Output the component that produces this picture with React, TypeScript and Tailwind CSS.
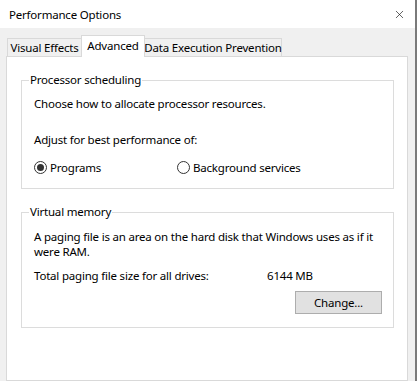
import { X } from 'lucide-react'

function Radio({ checked, label }: { checked?: boolean; label: string }) {
    return (
        <label className="flex items-center gap-[3px]">
            <span className="w-[13px] h-[13px] rounded-full border border-[#333333] bg-white flex items-center justify-center">
                {checked && <span className="w-[7px] h-[7px] rounded-full bg-[#333333]" />}
            </span>
            <span>{label}</span>
        </label>
    )
}

function GroupBox({ title, children }: { title: string; children: React.ReactNode }) {
    return (
        <fieldset className="ml-[14px] mr-[13px] border border-[#dcdcdc] pl-[12px] pr-[11px]">
            <legend className="-ml-[5px] px-[1px] leading-[16px]">{title}</legend>
            {children}
        </fieldset>
    )
}

export default function App() {
    return (
        <div
            className="w-[417px] h-[381px] flex flex-col bg-[#f0f0f0] text-[11.5px] tracking-[-0.2px] leading-[15px] text-black border-r-2 border-[#7a7a7a] overflow-hidden"
            style={{ fontFamily: '"Noto Sans", sans-serif' }}
        >
            <div className="h-[28px] shrink-0 bg-white flex items-center justify-between pl-[9px] pr-[9px]">
                <span>Performance Options</span>
                <X className="w-[13px] h-[13px] text-[#111]" strokeWidth={1.2} />
            </div>

            <div className="flex flex-col flex-1 pl-[6px] pr-[7px] pt-[7px]">
                <div className="flex items-end pl-[1px] whitespace-nowrap">
                    <div className="w-[74px] h-[18px] border-l border-t border-[#d9d9d9] flex items-center justify-center">
                        Visual Effects
                    </div>
                    <div className="relative z-10 -mb-px w-[64px] h-[22px] border-l border-t border-r border-[#d9d9d9] bg-white flex items-start justify-center pt-[2px]">
                        Advanced
                    </div>
                    <div className="w-[137px] h-[18px] border-t border-r border-[#d9d9d9] flex items-center justify-center">
                        Data Execution Prevention
                    </div>
                </div>

                <div className="flex-1 bg-white border border-[#d9d9d9] pt-[15px] flex flex-col gap-[15px]">
                    <GroupBox title="Processor scheduling">
                        <div className="pt-[8px] pb-[13px] flex flex-col">
                            <p>Choose how to allocate processor resources.</p>
                            <p className="mt-[21px]">Adjust for best performance of:</p>
                            <div className="mt-[13px] flex">
                                <div className="w-[143px]">
                                    <Radio checked label="Programs" />
                                </div>
                                <Radio label="Background services" />
                            </div>
                        </div>
                    </GroupBox>

                    <GroupBox title="Virtual memory">
                        <div className="pt-[9px] pb-[13px] flex flex-col">
                            <p>A paging file is an area on the hard disk that Windows uses as if it were RAM.</p>
                            <div className="mt-[9px] grid grid-cols-[233px_1fr]">
                                <span>Total paging file size for all drives:</span>
                                <span>6144 MB</span>
                            </div>
                            <div className="mt-[8px] flex justify-end">
                                <button className="w-[87px] h-[23px] bg-[#e1e1e1] border border-[#adadad]">
                                    Change...
                                </button>
                            </div>
                        </div>
                    </GroupBox>
                </div>
            </div>
        </div>
    )
}
